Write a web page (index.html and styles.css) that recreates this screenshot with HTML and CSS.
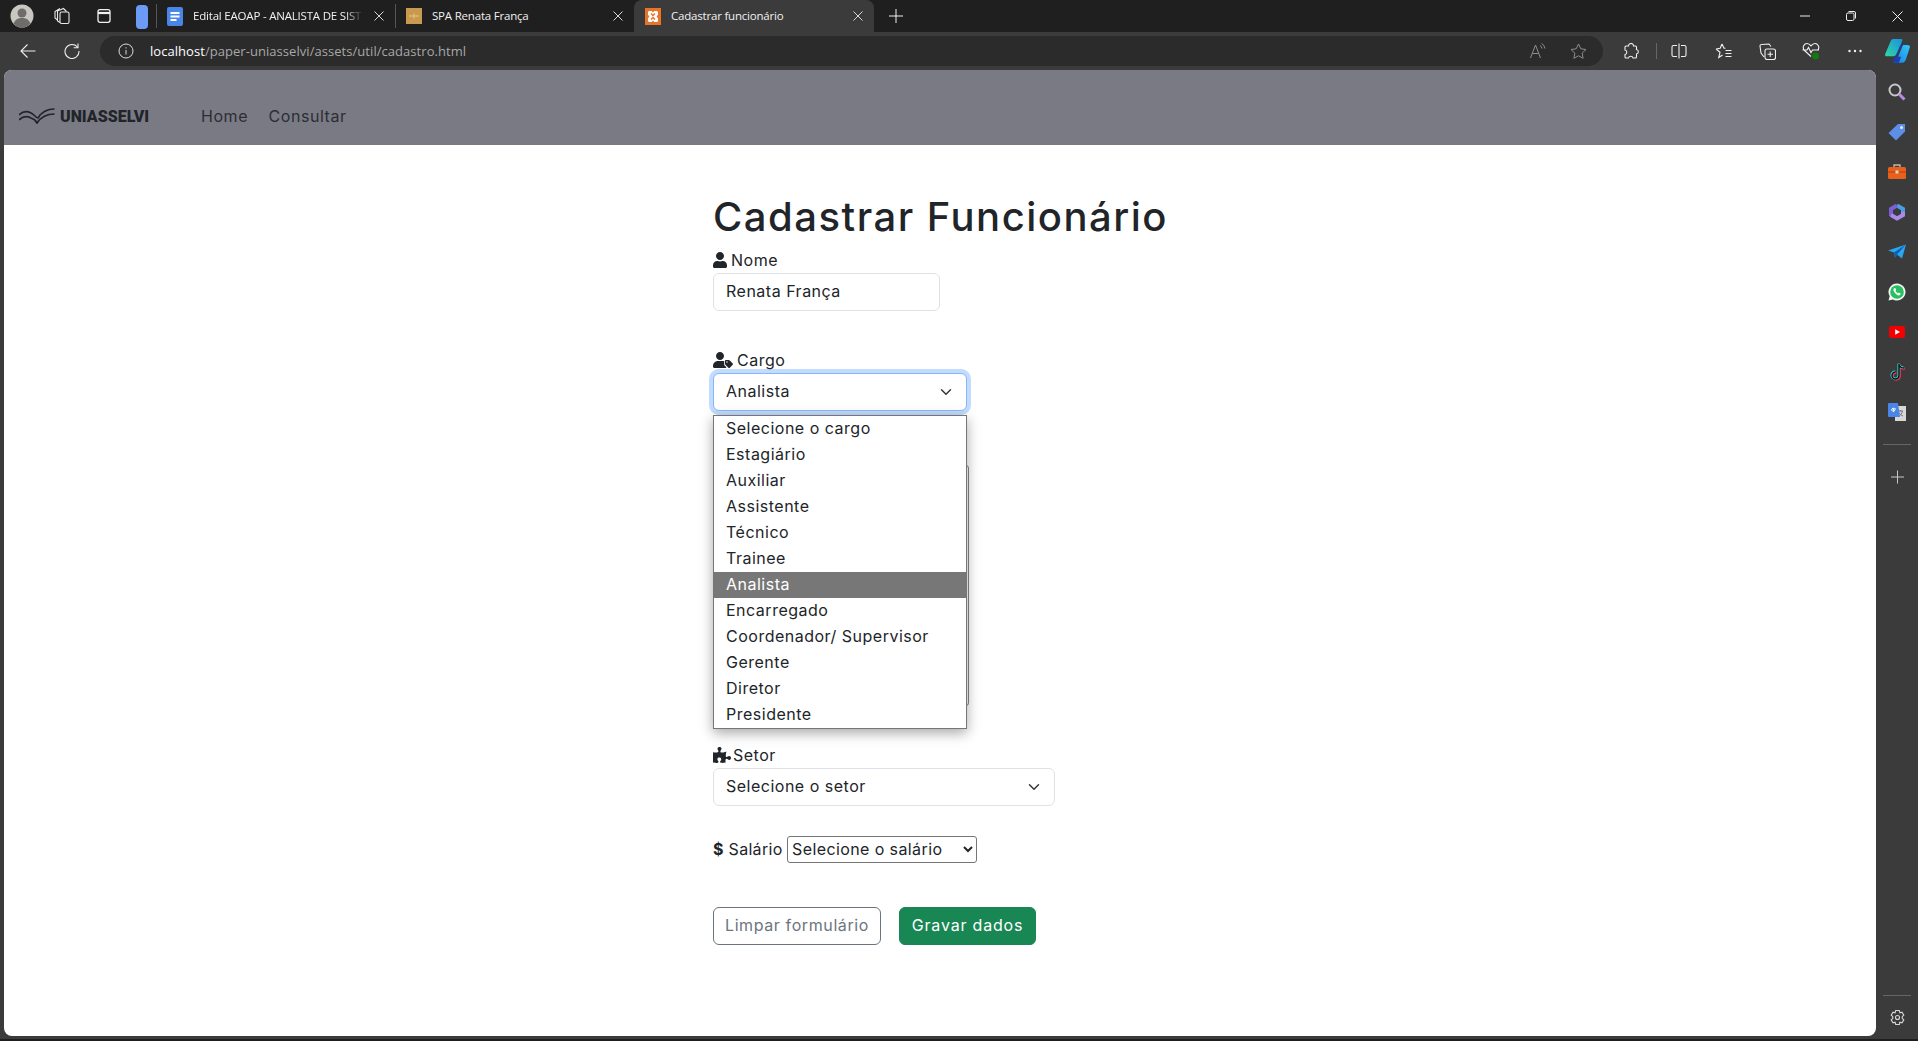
FILE: index.html
```html
<!DOCTYPE html>
<html>
    <head>
        <meta charset="utf-8" />
        <title>Cadastrar funcionário</title>
        <link rel="stylesheet" href="styles.css">
    </head>
    <body>
        <div class="tabstrip">
            <div class="slot slot_profile">
                <svg width="24" height="24" viewBox="0 0 24 24"><circle cx="12" cy="12" r="11.5" fill="#c9c7c2"/><circle cx="12" cy="9" r="4.5" fill="#6f6d6a"/><path d="M3.5 19.5c2-4.5 5-5.5 8.500-5.5s6.500 1 8.500 5.500c-2 2.500-5 4-8.500 4s-6.500-1.500-8.500-4z" fill="#6f6d6a"/></svg>
            </div>
            <div class="slot slot_ws">
                <svg width="18" height="18" viewBox="0 0 18 18" fill="none" stroke="#e8e8e8" stroke-width="1.1"><rect x="7" y="5" width="9" height="11.5" rx="1.5"/><path d="M7 15.5 4.500 14V4l6-2.500 3 3M4.500 13 2 11V4.500L7 1.500"/></svg>
            </div>
            <div class="slot slot_vtabs">
                <svg width="16" height="16" viewBox="0 0 16 16" fill="none" stroke="#f2f2f2" stroke-width="1.3"><rect x="2" y="1.700" width="12" height="12.600" rx="2"/><path d="M2 5h12" stroke-width="2.2"/></svg>
            </div>
            <div class="slot slot_group"><span class="group_pill"></span></div>
            <span class="tab_sep"></span>
            <div class="tab tab_docs">
                <svg class="favicon" width="16" height="19" viewBox="0 0 16 19"><rect width="16" height="19" rx="2" fill="#4a86e8"/><path d="M3.500 6h9M3.500 9.500h9M3.500 13h6" stroke="#fff" stroke-width="1.8"/></svg>
                <span class="tab_title tab_title_fade">Edital EAOAP - ANALISTA DE SIST</span>
                <svg class="tab_close" width="10" height="10" viewBox="0 0 10 10"><path d="M.5.5l9 9M9.500.5l-9 9" stroke="#d8d8d8" stroke-width="1"/></svg>
            </div>
            <span class="tab_sep"></span>
            <div class="tab tab_spa">
                <svg class="favicon" width="16" height="16" viewBox="0 0 16 16"><rect width="16" height="16" fill="#c99a4e"/><path d="M3 8h10M8 5.500v5" stroke="#e2c48c" stroke-width="1"/></svg>
                <span class="tab_title">SPA Renata França</span>
                <svg class="tab_close" width="10" height="10" viewBox="0 0 10 10"><path d="M.5.5l9 9M9.500.5l-9 9" stroke="#d8d8d8" stroke-width="1"/></svg>
            </div>
            <div class="tab tab_active">
                <svg class="favicon" width="16" height="17" viewBox="0 0 16 17"><rect width="16" height="17" fill="#e8742a"/><path d="M4.500 3h1.800c1 0 1.200 1.500 1.700 1.500S8.700 3 9.700 3h1.800C12.500 3 13 3.600 13 4.500v1.800c0 1-1.300 1.400-1.300 2.200s1.300 1.200 1.300 2.200v1.800c0 .9-.5 1.500-1.500 1.500H9.700c-1 0-1.200-1.500-1.700-1.500s-.7 1.500-1.700 1.500H4.500C3.500 14 3 13.400 3 12.500v-1.800c0-1 1.300-1.400 1.300-2.200S3 7.300 3 6.300V4.500C3 3.600 3.500 3 4.500 3z" fill="#fff"/><path d="M6 5.500 8 7.500l2-2M6 11.500l2-2 2 2" fill="none" stroke="#e8742a" stroke-width="1.5"/></svg>
                <span class="tab_title">Cadastrar funcionário</span>
                <svg class="tab_close" width="10" height="10" viewBox="0 0 10 10"><path d="M.5.5l9 9M9.500.5l-9 9" stroke="#d8d8d8" stroke-width="1"/></svg>
            </div>
            <div class="slot slot_new">
                <svg width="14" height="14" viewBox="0 0 14 14"><path d="M7 0v14M0 7h14" stroke="#f2f2f2" stroke-width="1"/></svg>
            </div>
            <div class="win_controls">
                <div class="slot win_btn"><svg width="10" height="10" viewBox="0 0 10 10"><path d="M0 5h10" stroke="#eee" stroke-width="1"/></svg></div>
                <div class="slot win_btn"><svg width="10" height="10" viewBox="0 0 10 10" fill="none" stroke="#eee" stroke-width="1"><rect x=".5" y="2" width="7.500" height="7.500" rx="1.500"/><path d="M2.500.5h5.500a1.500 1.500 0 0 1 1.500 1.500v5.500"/></svg></div>
                <div class="slot win_btn"><svg width="11" height="11" viewBox="0 0 11 11"><path d="M.5.5l10 10M10.500.5l-10 10" stroke="#eee" stroke-width="1"/></svg></div>
            </div>
        </div>

        <div class="toolbar">
            <div class="slot slot_back">
                <svg width="16" height="16" viewBox="0 0 16 16" fill="none" stroke="#eee" stroke-width="1.1"><path d="M15.500 8H1M7.500 1.500 1 8l6.500 6.500"/></svg>
            </div>
            <div class="slot slot_reload">
                <svg width="16" height="16" viewBox="0 0 16 16" fill="none" stroke="#eee" stroke-width="1.1"><path d="M13.800 4.500A7 7 0 1 0 15 8"/><path d="M14 .5v4.300H9.700"/></svg>
            </div>
            <div class="address_bar">
                <svg class="info_icon" width="16" height="16" viewBox="0 0 16 16" fill="none" stroke="#ddd"><circle cx="8" cy="8" r="7"/><path d="M8 7v4.500M8 4.300v1.200"/></svg>
                <span class="url"><span class="url_host">localhost</span>/paper-uniasselvi/assets/util/cadastro.html</span>
                <span class="address_actions">
                    <svg width="16" height="16" viewBox="0 0 16 16" fill="none" stroke="#8d8d8d"><path d="M.5 15 5.500 2l5 13M2.300 10.500h6.400M10 2.500a4 4 0 0 1 2 3M11.500.5a6.500 6.500 0 0 1 3.500 5"/></svg>
                    <svg width="17" height="17" viewBox="0 0 17 17" fill="none" stroke="#8d8d8d"><path d="M8.500 1l2.300 4.800 5.200.7-3.800 3.600.9 5.200-4.600-2.500-4.600 2.500.9-5.200L1 6.500l5.200-.7z"/></svg>
                </span>
            </div>
            <div class="slot slot_tool slot_ext">
                <svg width="16" height="17" viewBox="0 0 16 17" fill="none" stroke="#f0f0f0" stroke-width="1.1"><path d="M5.500 3a2.500 2.500 0 0 1 5 0h2a1 1 0 0 1 1 1v2.500a2.300 2.300 0 0 1 0 4.500v3a1 1 0 0 1-1 1h-2.500a2.300 2.300 0 0 0-4.500 0H3a1 1 0 0 1-1-1v-2.500a2.300 2.300 0 0 0 0-4.500V4a1 1 0 0 1 1-1z"/></svg>
            </div>
            <span class="tool_sep"></span>
            <div class="slot slot_tool slot_split">
                <svg width="16" height="16" viewBox="0 0 16 16" fill="none" stroke="#f0f0f0" stroke-width="1.1"><path d="M6 2.500H2.500a1.500 1.500 0 0 0-1.500 1.500v8a1.500 1.500 0 0 0 1.500 1.500H6M10 2.500h3.500A1.500 1.500 0 0 1 15 4v8a1.500 1.500 0 0 1-1.500 1.500H10M8 .5v15"/></svg>
            </div>
            <div class="slot slot_tool slot_fav">
                <svg width="17" height="16" viewBox="0 0 17 16" fill="none" stroke="#f0f0f0" stroke-width="1.1"><path d="M7 1l2 4.300h1.500M1 6l4 3.200-1.200 5.300L7.500 12M1 6l4.200-.7L7 1M10.500 7.500h6M10.500 10.500h6M10.500 13.500h6"/></svg>
            </div>
            <div class="slot slot_tool slot_coll">
                <svg width="17" height="17" viewBox="0 0 17 17" fill="none" stroke="#f0f0f0" stroke-width="1.1"><rect x="6" y="6" width="10.500" height="10.500" rx="2"/><path d="M11.200 8.500v5.500M8.500 11.200h5.500M12 3.500 10 1 2.500 1.500a1.500 1.500 0 0 0-1.500 1.500l1 7L5 14"/></svg>
            </div>
            <div class="slot slot_tool slot_health">
                <svg width="18" height="18" viewBox="0 0 18 18" fill="none" stroke="#f0f0f0" stroke-width="1.1"><path d="M9 14.500 2.500 8.500C-.5 5 2.500 1.500 5 1.500c2 0 3 1 4 2.300 1-1.300 2-2.300 4-2.300 2.500 0 5.500 3.500 2.500 7M.5 8H5l1.500-2.500L9 10.500 10.500 8H17"/><circle cx="13.500" cy="14" r="3.500" fill="#107c10" stroke="none"/></svg>
            </div>
            <div class="slot slot_tool slot_more">
                <svg width="14" height="4" viewBox="0 0 14 4"><circle cx="1.500" cy="2" r="1.200" fill="#f0f0f0"/><circle cx="7" cy="2" r="1.200" fill="#f0f0f0"/><circle cx="12.500" cy="2" r="1.200" fill="#f0f0f0"/></svg>
            </div>
            <div class="slot slot_copilot">
                <svg width="25" height="24" viewBox="0 0 25 24">
                    <defs>
                        <linearGradient id="cop_left" x1="0" y1="1" x2="1" y2="0"><stop offset="0" stop-color="#2fd8a0"/><stop offset="1" stop-color="#1b8fe0"/></linearGradient>
                        <linearGradient id="cop_right" x1="0" y1="1" x2="1" y2="0"><stop offset="0" stop-color="#1c7fe8"/><stop offset="1" stop-color="#30c8f4"/></linearGradient>
                    </defs>
                    <path d="M8.500 0H16c1 0 1.500.5 1.300 1.500L13 13l-2.500 3.500c-.5.500-1 .8-2 .8H2c-1.500 0-2.200-1-1.800-2.300L5.500 2.500C6 .800 7 0 8.500 0z" fill="url(#cop_left)"/>
                    <path d="M18 6h4.500c1.500 0 2.800 1 2.300 2.500L21 20c-.8 2.500-2 3.800-4 3.800h-7c-1.200 0-1.600-.8-1.200-1.800L13 18z" fill="url(#cop_right)"/>
                    <path d="M8 17.500h3.500L15 10l3-4c-2-.5-3 .5-3.500 2L11 16l-3 6c-.2 1 .5 1.800 1.500 1.800H14l2-6h-4.500z" fill="#1a3fb0"/>
                </svg>
            </div>
        </div>

        <div class="main">
            <div class="page">
                <nav class="navbar">
                    <a class="brand">
                        <svg width="36" height="16" viewBox="0 0 36 16" fill="none" stroke="#212529" stroke-width="1.7"><path d="M0 7C4 3 8 3 12 5c4 2 5 5 7 5C22 5 27 1 35.500 1"/><path d="M0 12c4-4 8-4 12-2 3 1 5 3 6 5 4-6 9-9 17.500-9"/></svg>
                        <span class="brand_name">UNIASSELVI</span>
                    </a>
                    <a class="nav_link">Home</a>
                    <a class="nav_link">Consultar</a>
                </nav>

                <form class="form">
                    <h1>Cadastrar Funcionário</h1>

                    <div class="field">
                        <label class="field_label">
                            <svg class="fa" width="14" height="16" viewBox="0 0 448 512"><path d="M224 256c70.700 0 128-57.300 128-128S294.700 0 224 0 96 57.300 96 128s57.300 128 128 128zm89.600 32h-16.700c-22.200 10.200-46.900 16-72.900 16s-50.600-5.800-72.900-16h-16.700C60.200 288 0 348.200 0 422.400V464c0 26.500 21.500 48 48 48h352c26.500 0 48-21.500 48-48v-41.600c0-74.200-60.200-134.400-134.400-134.400z"/></svg>
                            Nome
                        </label>
                        <input class="form_control input_nome" type="text" value="Renata França" />
                    </div>

                    <div class="field field_cargo">
                        <label class="field_label">
                            <svg class="fa" width="20" height="16" viewBox="0 0 640 512"><path d="M224 256c70.700 0 128-57.300 128-128S294.700 0 224 0 96 57.300 96 128s57.300 128 128 128zm64 32H160C71.600 288 0 359.600 0 448v16c0 26.500 21.500 48 48 48h352c14 0 26-5 35-14l-55-55c-14-14-22-33-22-53v-90c0-4 0-8 1-11-22-1-49-1-71-1z"/><path d="M630.600 364.900l-90.300-90.200c-12-12-28.300-18.700-45.300-18.700h-79.300c-17.700 0-32 14.300-32 32v79.200c0 17 6.700 33.200 18.700 45.200l90.300 90.200c12.500 12.500 32.800 12.500 45.300 0l92.500-92.500c12.600-12.500 12.600-32.700.1-45.200zM447.800 344c-13.300 0-24-10.700-24-24s10.700-24 24-24 24 10.700 24 24-10.700 24-24 24z"/></svg>
                            Cargo
                        </label>
                        <select class="form_select select_cargo"><option>Analista</option></select>
                        <ul class="dropdown">
                            <li>Selecione o cargo</li>
                            <li>Estagiário</li>
                            <li>Auxiliar</li>
                            <li>Assistente</li>
                            <li>Técnico</li>
                            <li>Trainee</li>
                            <li class="selected">Analista</li>
                            <li>Encarregado</li>
                            <li>Coordenador/ Supervisor</li>
                            <li>Gerente</li>
                            <li>Diretor</li>
                            <li>Presidente</li>
                        </ul>
                    </div>

                    <div class="covered_box"></div>

                    <div class="field">
                        <label class="field_label">
                            <svg class="fa fa_puzzle" width="18" height="16" viewBox="0 0 576 512"><path d="M519.442 288.651c-41.519 0-59.500 31.593-82.058 31.593C377.409 320.244 432 144 432 144s-196.288 80-196.288-3.297c0-35.827 36.288-46.250 36.288-85.985C272 19.216 243.885 0 210.539 0c-34.654 0-66.366 18.891-66.366 56.346 0 41.364 31.711 59.277 31.711 81.750C175.885 207.719 0 166.758 0 166.758v333.237s178.635 41.047 178.635-28.662c0-22.473-40-40.107-40-81.471 0-37.456 29.250-56.346 63.577-56.346 33.673 0 61.788 19.216 61.788 54.717 0 39.735-36.288 50.158-36.288 85.985 0 60.803 129.675 25.730 181.230 25.730 0 0-34.725-120.101 25.827-120.101 35.962 0 46.423 36.152 86.308 36.152C556.712 416 576 387.990 576 354.443c0-34.199-18.962-65.792-56.558-65.792z"/></svg>
                            Setor
                        </label>
                        <select class="form_select select_setor"><option>Selecione o setor</option></select>
                    </div>

                    <div class="salario_row">
                        <label class="salario_label"><b class="dollar">$</b> Salário</label>
                        <select class="select_salario"><option>Selecione o salário</option></select>
                    </div>

                    <div class="buttons">
                        <button type="button" class="btn btn_outline">Limpar formulário</button>
                        <button type="button" class="btn btn_green">Gravar dados</button>
                    </div>
                </form>
            </div>

            <div class="sidebar">
                <svg width="18" height="18" viewBox="0 0 18 18" fill="none"><circle cx="7" cy="7" r="5.500" stroke="#c8c8c8" stroke-width="2"/><path d="M11 11l5.500 5.500" stroke="#b98be0" stroke-width="3"/></svg>
                <svg width="18" height="18" viewBox="0 0 18 18"><path d="M10 1h7v7.500L8 17.500 .5 10z" fill="#5e8fe8"/><circle cx="13.500" cy="4.500" r="1.500" fill="#e6eefc"/></svg>
                <svg width="18" height="16" viewBox="0 0 18 16"><path d="M6 3V1h6v2" fill="none" stroke="#c8b8a8" stroke-width="1.3"/><rect y="3" width="18" height="12" rx="1.500" fill="#e8601c"/><path d="M0 8h18" stroke="#b8400c"/><rect x="7.500" y="6.500" width="3" height="3" fill="#e8d8c8"/></svg>
                <svg width="18" height="18" viewBox="0 0 18 18" fill="none" stroke-width="4"><path d="M9 2.500 15 6v3" stroke="#4a9fe0"/><path d="M3 13V6l6-3.500" stroke="#7b5fd6"/><path d="M15 9v3l-6 3.500L3 12" stroke="#a98ae8"/></svg>
                <svg width="18" height="15" viewBox="0 0 18 15"><path d="M0 6l18-6-4 14-5-4-2 3-1-5z" fill="#2aa6f0"/><path d="M6 8l12-8-9 10-2 3z" fill="#0c5fa8"/></svg>
                <svg width="18" height="18" viewBox="0 0 18 18"><path d="M9 .5a8.500 8.500 0 0 0-7.300 12.800L.5 17.500l4.300-1.100A8.500 8.500 0 1 0 9 .5z" fill="#f4f4f4"/><circle cx="9" cy="9" r="6.800" fill="#25c060"/><path d="M6.300 5c-1.300 1-1 3 .7 5s3.800 3 5 2c.8-.7.7-1.500.2-1.800l-1.400-.7-.8.8c-1-.3-2.200-1.500-2.500-2.500l.7-.7-.6-1.500c-.3-.6-1-.7-1.300-.6z" fill="#fff"/></svg>
                <svg width="16" height="12" viewBox="0 0 16 12"><rect width="16" height="12" rx="2.500" fill="#f40000"/><path d="M6.200 3.300v5.400L11 6z" fill="#fff"/></svg>
                <svg width="15" height="18" viewBox="0 0 15 18" fill="none"><path d="M9 1v11.500a3.500 3.500 0 1 1-3.500-3.500M9 1c.3 2.500 2 4 5 4" stroke="#fe2c55" stroke-width="2.2" transform="translate(.8 .6)"/><path d="M9 1v11.500a3.500 3.500 0 1 1-3.500-3.500M9 1c.3 2.500 2 4 5 4" stroke="#25f4ee" stroke-width="2.2" transform="translate(-.4 -.3)"/><path d="M9 1v11.500a3.500 3.500 0 1 1-3.500-3.500M9 1c.3 2.500 2 4 5 4" stroke="#111" stroke-width="1.5"/></svg>
                <svg width="18" height="18" viewBox="0 0 18 18"><rect x="7" y="3" width="11" height="15" fill="#d8d8d8"/><path d="M10 8h5M12.500 7v1M11 13c2-1 3-3 3.500-5M11 9.500c1 2 2.500 3 4 3.500" stroke="#777" fill="none"/><path d="M1 0h9l2 14H1a1 1 0 0 1-1-1V1a1 1 0 0 1 1-1z" fill="#4a86e8"/><path d="M8 6H5.500v1.500h1.300a1.600 1.600 0 1 1-.5-2" fill="none" stroke="#fff"/></svg>
                <span class="side_sep"></span>
                <svg class="side_plus" width="13" height="13" viewBox="0 0 13 13"><path d="M6.500 0v13M0 6.500h13" stroke="#c8c8c8" stroke-width="1"/></svg>
                <span class="side_sep side_sep_bottom"></span>
                <svg class="side_gear" width="17" height="17" viewBox="0 0 17 17" fill="none" stroke="#d8d8d8" stroke-width="1.1"><path d="M6.700 1h3.600l.6 2.200 2.100-.6 1.800 3-1.600 1.600v1.600l1.600 1.600-1.800 3-2.100-.6-.6 2.200H6.700l-.6-2.200-2.100.6-1.800-3 1.600-1.600V7.200L2.200 5.600l1.800-3 2.100.6z"/><circle cx="8.500" cy="8" r="2"/></svg>
            </div>
        </div>
        <div class="bottom_edge"></div>
    </body>
</html>
```

FILE: styles.css
```css
* {
    box-sizing: border-box;
}

html, body {
    margin: 0;
    height: 100%;
}

body {
    height: 1041px;
    overflow: hidden;
    background-color: #3b3b3b;
    font-family: "Inter", "Liberation Sans", sans-serif;
    color: #212529;
}

.slot {
    display: flex;
    align-items: center;
    justify-content: center;
    flex: none;
}

/* browser tabs */
.tabstrip {
    display: flex;
    align-items: center;
    height: 32px;
    background-color: #1f1f1f;
    font-family: "Open Sans", "Liberation Sans", sans-serif;
    font-size: 11.5px;
    letter-spacing: -.2px;
    color: #f0f0f0;
}

.slot_profile { width: 44px; }
.slot_ws { width: 36px; }
.slot_vtabs { width: 48px; }
.slot_group { width: 28px; }
.slot_new { width: 44px; }

.group_pill {
    display: block;
    width: 12px;
    height: 24px;
    margin-top: 2px;
    border-radius: 4px;
    background-color: #6b9bf5;
}

.tab_sep {
    flex: none;
    width: 1px;
    height: 24px;
    background-color: #555;
}

.tab {
    display: flex;
    align-items: center;
    flex: none;
    height: 32px;
}

.tab_docs { width: 238px; padding-left: 10px; }
.tab_spa { width: 238px; padding-left: 10px; }

.tab_active {
    width: 240px;
    padding-left: 11px;
    border-radius: 8px 8px 0 0;
    background-color: #3b3b3b;
}

.favicon {
    flex: none;
    margin-right: 10px;
}

.tab_title {
    flex: 1;
    margin-top: -2px;
    overflow: hidden;
    white-space: nowrap;
}

.tab_title_fade {
    -webkit-mask-image: linear-gradient(to right, #000 90%, transparent);
    mask-image: linear-gradient(to right, #000 90%, transparent);
}

.tab_close {
    flex: none;
    margin: 0 11px;
}

.win_controls {
    display: flex;
    margin-left: auto;
    margin-right: -2px;
}

.win_btn { width: 46px; }

/* address bar and tools */
.toolbar {
    display: flex;
    align-items: center;
    height: 38px;
    background-color: #3b3b3b;
    font-family: "Open Sans", "Liberation Sans", sans-serif;
}

.slot_back { width: 50px; padding-left: 6px; }
.slot_reload { width: 44px; }

.address_bar {
    display: flex;
    align-items: center;
    flex: none;
    width: 1503px;
    height: 30px;
    margin-left: 6px;
    padding-left: 18px;
    border-radius: 15px;
    background-color: #2b2b2b;
}

.info_icon { flex: none; }

.url {
    margin-left: 16px;
    font-size: 13px;
    letter-spacing: .05px;
    color: #a8a8a8;
}

.url_host { color: #fff; }

.address_actions {
    display: flex;
    align-items: center;
    gap: 24px;
    margin-left: auto;
    margin-right: 16px;
}

.slot_tool { width: 44px; }
.slot_ext { width: 50px; margin-left: 3px; }

.tool_sep {
    width: 1px;
    height: 16px;
    background-color: #666;
}

.slot_copilot { width: 40px; }

/* page */
.main {
    display: flex;
    height: 966px;
    padding-left: 4px;
}

.page {
    flex: 1;
    border-radius: 8px;
    overflow: hidden;
    background-color: #fff;
}

.navbar {
    display: flex;
    align-items: center;
    height: 75px;
    padding: 17px 0 0 15px;
    background-color: #7a7a85;
    font-size: 16px;
}

.brand {
    display: flex;
    align-items: center;
    gap: 5px;
    width: 182px;
}

.brand_name {
    font-family: "Roboto", "Liberation Sans", sans-serif;
    font-size: 16px;
    font-weight: 900;
    color: #212529;
}

.nav_link {
    margin-right: 20.5px;
    letter-spacing: .55px;
    color: #2b2e33;
}

.form {
    padding: 48px 0 0 709px;
    font-size: 16px;
}

h1 {
    margin: 0 0 7px;
    font-size: 40px;
    font-weight: 500;
    line-height: 48px;
    letter-spacing: 1.5px;
    white-space: nowrap;
}

.field {
    position: relative;
    margin-bottom: 37px;
}

.field_cargo { margin-bottom: 0; }

.field_label {
    display: flex;
    align-items: center;
    gap: 4px;
    height: 25px;
    padding-bottom: 2px;
    letter-spacing: .5px;
}

.fa {
    flex: none;
    fill: #212529;
}

.fa_puzzle { margin-right: -2px; }

.form_control, .form_select {
    display: block;
    height: 38px;
    padding: 0 12px 2px;
    border: 1px solid #dee2e6;
    border-radius: 6px;
    background-color: #fff;
    font-family: inherit;
    font-size: 16px;
    letter-spacing: .5px;
    color: #212529;
    outline: none;
}

.form_select {
    appearance: none;
    background-image: url("data:image/svg+xml,%3csvg xmlns='http://www.w3.org/2000/svg' viewBox='0 0 16 16'%3e%3cpath fill='none' stroke='%23343a40' stroke-linecap='round' stroke-linejoin='round' stroke-width='2' d='m2 5 6 6 6-6'/%3e%3c/svg%3e");
    background-repeat: no-repeat;
    background-position: right 12px center;
    background-size: 16px 12px;
}

.input_nome { width: 227px; }
.select_setor { width: 342px; }

.select_cargo {
    width: 254px;
    border-color: #86b7fe;
    box-shadow: 0 0 0 4px rgba(13, 110, 253, .25);
}

.dropdown {
    position: absolute;
    top: 67px;
    left: 0;
    z-index: 2;
    width: 254px;
    margin: 0;
    padding: 0;
    border: 1px solid #767676;
    background-color: #fff;
    box-shadow: 0 4px 12px rgba(0, 0, 0, .35);
    list-style: none;
    letter-spacing: .5px;
}

.dropdown li {
    height: 26px;
    padding-left: 12px;
    line-height: 24px;
    white-space: nowrap;
}

.dropdown .selected {
    background-color: #777;
    color: #fff;
}

.covered_box {
    width: 256px;
    height: 241px;
    margin: 54px 0 37px;
    border: 1px solid #888;
    border-radius: 3px;
}

.salario_row {
    display: flex;
    align-items: center;
    gap: 4px;
    margin-top: -7px;
}

.salario_label {
    width: 70px;
    padding-bottom: 2px;
    white-space: nowrap;
    letter-spacing: .3px;
}

.dollar { font-weight: 700; }

.select_salario {
    width: 190px;
    height: 27px;
    padding: 0 0 2px;
    border: 1px solid #767676;
    border-radius: 3px;
    background-color: #fff;
    font-family: inherit;
    font-size: 16px;
    letter-spacing: .4px;
    color: #212529;
}

.buttons {
    display: flex;
    gap: 18px;
    margin-top: 44px;
}

.btn {
    height: 38px;
    padding-bottom: 3px;
    border-radius: 6px;
    font-family: inherit;
    font-size: 16px;
}

.btn_outline {
    width: 168px;
    border: 1px solid #6c757d;
    background-color: #fff;
    letter-spacing: .6px;
    color: #6c757d;
}

.btn_green {
    width: 137px;
    border: 1px solid #198754;
    background-color: #198754;
    letter-spacing: .8px;
    color: #fff;
}

/* right sidebar */
.sidebar {
    display: flex;
    flex-direction: column;
    align-items: center;
    flex: none;
    width: 42px;
    padding-top: 2px;
}

.sidebar svg {
    flex: none;
    height: 40px;
}

.side_sep {
    flex: none;
    width: 28px;
    height: 1px;
    margin-top: 12px;
    background-color: #666;
}

.side_plus { margin-top: 12px; }

.side_sep_bottom {
    margin-top: auto;
    margin-bottom: 2px;
}

.side_gear { margin-bottom: -2px; }

.bottom_edge {
    height: 2px;
    margin-top: 3px;
    background-color: #1f1f1f;
}
```
